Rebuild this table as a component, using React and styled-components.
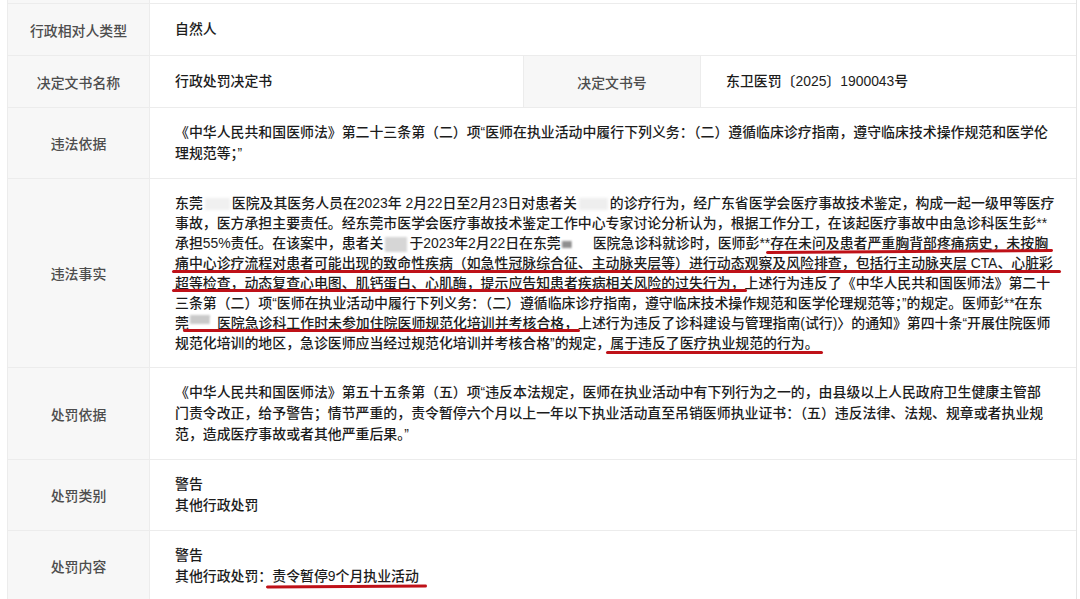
import React from 'react';
import styled, { createGlobalStyle } from 'styled-components';

const GlobalStyle = createGlobalStyle`
  html, body {
    margin: 0;
    padding: 0;
    background: #fff;
  }
  body {
    font-family: "Liberation Sans", "Noto Sans CJK SC", sans-serif;
  }
`;

const Page = styled.div`
  width: 1080px;
  height: 599px;
  overflow: hidden;
  padding-left: 7px;
  box-sizing: border-box;
`;

const Table = styled.div`
  width: 1068px;
  border-left: 1px solid #ececec;
  border-right: 1px solid #e4e4e4;
`;

const Row = styled.div`
  display: grid;
  grid-template-columns: ${p => (p.$split ? '142px 373px 178px 1fr' : '142px 1fr')};
  min-height: ${p => p.$h || 51}px;
  border-bottom: 1px solid #ececec;
`;

const Label = styled.div`
  background: #f7f7f7;
  color: #4d4d4d;
  font-size: 13.9px;
  font-weight: 500;
  display: flex;
  align-items: center;
  justify-content: center;
  border-right: 1px solid #ececec;
  ${p => p.$inner && 'border-left: 1px solid #ececec;'}
`;

const Value = styled.div`
  padding: ${p => (p.$cut ? 0 : '14px 25px')};
  color: #1c1c1c;
  font-size: 13.9px;
  font-weight: 500;
  line-height: 21px;
  display: flex;
  flex-direction: column;
  justify-content: center;
`;

const Para = styled.div`
  line-height: ${p => p.$lh || 21}px;
`;

const Line = styled.div`
  white-space: nowrap;
`;

// red hand-drawn annotation under a run of text
const Mark = styled.span`
  position: relative;
  &::after {
    content: '';
    position: absolute;
    left: ${p => p.$l ?? 0}px;
    right: ${p => p.$r ?? 0}px;
    bottom: ${p => p.$b ?? -2}px;
    height: 3px;
    border-radius: 2px;
    background: #bf1118;
    transform: rotate(${p => p.$tilt ?? 0}deg);
  }
`;

const Redact = styled.span`
  display: inline-block;
  width: ${p => p.$w}px;
  height: ${p => p.$h ?? 12}px;
  margin: 0 ${p => p.$m ?? 2}px;
  background: ${p => p.$tone};
  filter: blur(${p => p.$blur ?? 1.5}px);
  vertical-align: ${p => p.$v ?? 'middle'};
`;

const App = () => (
  <Page>
    <GlobalStyle />
    <Table>
      <Row $h={3}>
        <Label />
        <Value $cut />
      </Row>

      <Row>
        <Label>行政相对人类型</Label>
        <Value>自然人</Value>
      </Row>

      <Row $split>
        <Label>决定文书名称</Label>
        <Value>行政处罚决定书</Value>
        <Label $inner>决定文书号</Label>
        <Value>东卫医罚〔2025〕1900043号</Value>
      </Row>

      <Row>
        <Label>违法依据</Label>
        <Value>
          <Para>
            <Line>《中华人民共和国医师法》第二十三条第（二）项“医师在执业活动中履行下列义务：（二）遵循临床诊疗指南，遵守临床技术操作规范和医学伦</Line>
            <Line>理规范等；”</Line>
          </Para>
        </Value>
      </Row>

      <Row>
        <Label>违法事实</Label>
        <Value>
          <Para $lh={20}>
            <Line>
              东莞<Redact $w={25} $tone="#f0f0f0" />医院及其医务人员在2023年 2月22日至2月23日对患者关
              <Redact $w={29} $tone="#eeeeee" />的诊疗行为，经广东省医学会医疗事故技术鉴定，构成一起一级甲等医疗
            </Line>
            <Line>事故，医方承担主要责任。经东莞市医学会医疗事故技术鉴定工作中心专家讨论分析认为，根据工作分工，在该起医疗事故中由急诊科医生彭**</Line>
            <Line>
              承担55%责任。在该案中，患者关<Redact $w={22} $h={15} $tone="#d6d6d6" $blur={1} />于2023年2月22日在东莞
              <Redact $w={10} $h={7} $tone="#8f8f8f" $blur={0.8} $m={1} />
              <Redact $w={20} $tone="#ffffff" $m={0} />医院急诊科就诊时，医师彭**
              <Mark $l={-4} $r={-5} $tilt={-0.4}>存在未问及患者严重胸背部疼痛病史，未按胸</Mark>
            </Line>
            <Line>
              <Mark $l={-3} $r={-8}>痛中心诊疗流程对患者可能出现的致命性疾病（如急性冠脉综合征、主动脉夹层等）进行动态观察及风险排查，包括行主动脉夹层 CTA、心脏彩</Mark>
            </Line>
            <Line>
              <Mark $l={-3} $r={-2} $b={-1}>超等检查，动态复查心电图、肌钙蛋白、心肌酶，提示应告知患者疾病相关风险的过失行为，</Mark>
              上述行为违反了《中华人民共和国医师法》第二十
            </Line>
            <Line>三条第（二）项“医师在执业活动中履行下列义务：（二）遵循临床诊疗指南，遵守临床技术操作规范和医学伦理规范等；”的规定。医师彭**在东</Line>
            <Line>
              莞
              <Mark $l={-6} $r={-2} $b={-1}>
                <Redact $w={20} $h={9} $tone="#c9c9c9" $blur={1} $v="4px" $m={1} />
                <Redact $w={6} $tone="#ffffff" $m={0} />
                医院急诊科工作时未参加住院医师规范化培训并考核合格，
              </Mark>
              上述行为违反了诊科建设与管理指南(试行)〉的通知》第四十条“开展住院医师
            </Line>
            <Line>
              规范化培训的地区，急诊医师应当经过规范化培训并考核合格”的规定，
              <Mark $l={-4} $r={-4} $b={-3}>属于违反了医疗执业规范的行为。</Mark>
            </Line>
          </Para>
        </Value>
      </Row>

      <Row>
        <Label>处罚依据</Label>
        <Value>
          <Para>
            <Line>《中华人民共和国医师法》第五十五条第（五）项“违反本法规定，医师在执业活动中有下列行为之一的，由县级以上人民政府卫生健康主管部</Line>
            <Line>门责令改正，给予警告；情节严重的，责令暂停六个月以上一年以下执业活动直至吊销医师执业证书：（五）违反法律、法规、规章或者执业规</Line>
            <Line>范，造成医疗事故或者其他严重后果。”</Line>
          </Para>
        </Value>
      </Row>

      <Row>
        <Label>处罚类别</Label>
        <Value>
          <Para>
            <Line>警告</Line>
            <Line>其他行政处罚</Line>
          </Para>
        </Value>
      </Row>

      <Row>
        <Label>处罚内容</Label>
        <Value>
          <Para>
            <Line>警告</Line>
            <Line>
              其他行政处罚：<Mark $l={-6} $r={-8} $b={-4} $tilt={-0.3}>责令暂停9个月执业活动</Mark>
            </Line>
          </Para>
        </Value>
      </Row>

      <Row $h={20}>
        <Label />
        <Value $cut />
      </Row>
    </Table>
  </Page>
);

export default App;
